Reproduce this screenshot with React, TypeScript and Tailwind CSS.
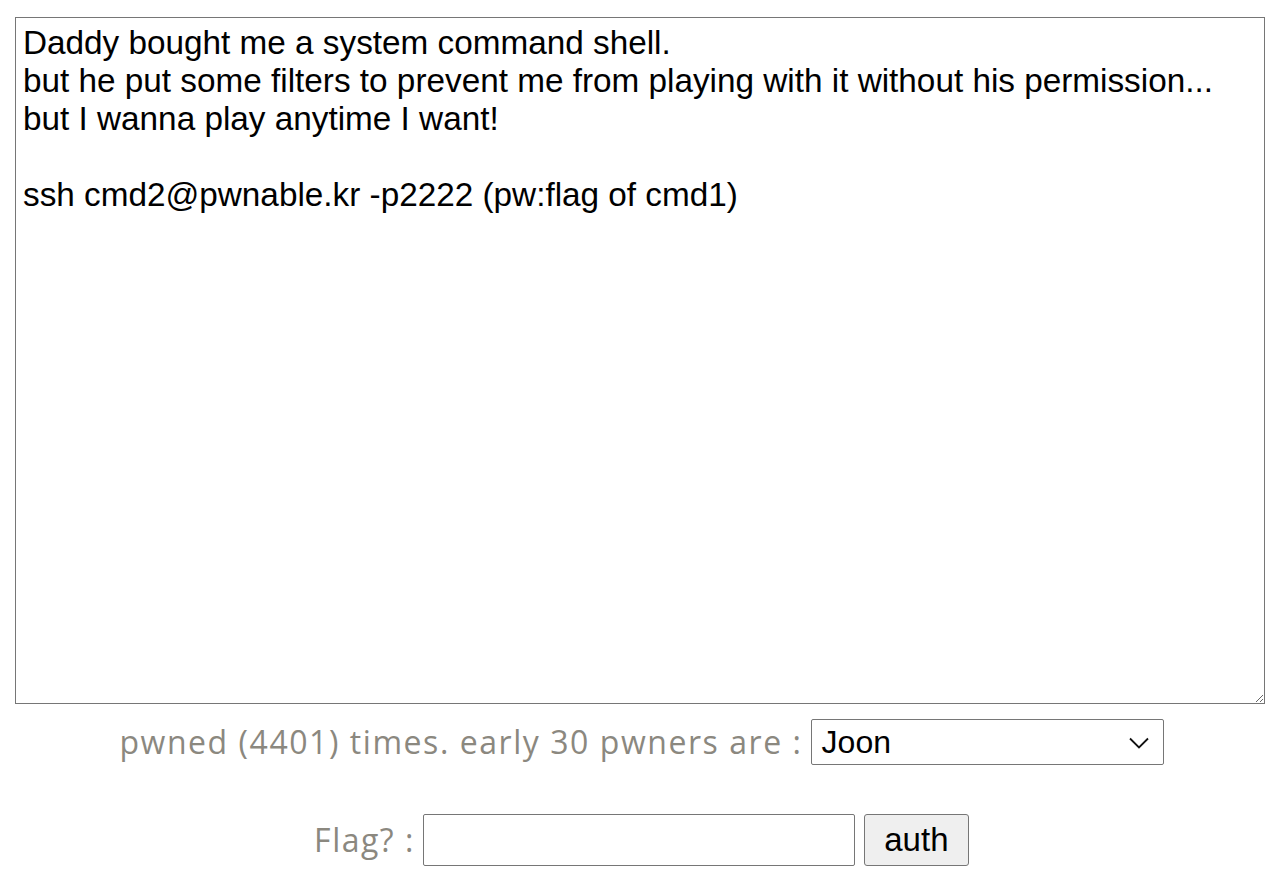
const text = `Daddy bought me a system command shell.
but he put some filters to prevent me from playing with it without his permission...
but I wanna play anytime I want!

ssh cmd2@pwnable.kr -p2222 (pw:flag of cmd1)`

export default function App() {
  return (
    <div className="w-[1287px] h-[879px] bg-white overflow-hidden">
      <div className="pt-[17px] pl-[15px]">
        <textarea
          readOnly
          defaultValue={text}
          className="block w-[1250px] h-[687px] border border-[#767676] px-[7px] pt-[6px] pb-[4px] text-[33.3px] leading-[38px] text-black resize-y outline-none font-['Liberation_Sans',Arial,sans-serif]"
        />
      </div>

      <div className="flex items-center justify-center pr-[4px] mt-[15px] h-[46px]">
        <span className="text-[32px] tracking-[1.55px] text-[#8b887f] font-['Open_Sans',sans-serif] mr-[8px] whitespace-nowrap">
          pwned (4401) times. early 30 pwners are :
        </span>
        <div className="relative w-[353px] h-[46px] border border-[#767676] rounded-[2px] bg-white flex items-center">
          <span className="pl-[10px] text-[32px] text-black font-['Liberation_Sans',Arial,sans-serif]">Joon</span>
          <svg className="absolute right-[14px] top-[17px]" width="20" height="12" viewBox="0 0 20 12" fill="none">
            <path d="M1 1.5L10 10.5L19 1.5" stroke="#111" strokeWidth="1.8" />
          </svg>
        </div>
      </div>

      <div className="flex items-center justify-center pr-[4px] mt-[49px] h-[52px]">
        <span className="text-[32px] tracking-[1.5px] text-[#8b887f] font-['Open_Sans',sans-serif] mr-[8px] whitespace-nowrap">
          Flag? :
        </span>
        <input
          type="text"
          className="w-[432px] h-[52px] border border-[#767676] rounded-[2px] bg-white outline-none"
        />
        <button className="ml-[9px] w-[105px] h-[52px] border border-[#767676] rounded-[3px] bg-[#efefef] text-[33px] text-black font-['Liberation_Sans',Arial,sans-serif]">
          auth
        </button>
      </div>
    </div>
  )
}
